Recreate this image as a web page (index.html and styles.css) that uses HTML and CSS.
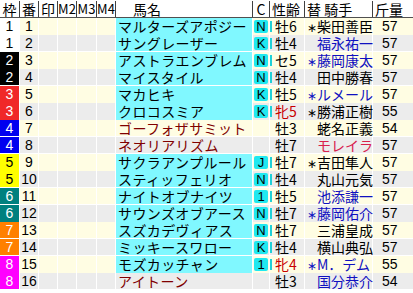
FILE: index.html
```html
<!DOCTYPE html>
<html lang="ja">
<head>
<meta charset="utf-8">
<link rel="stylesheet" href="styles.css">
</head>
<body>
<div class="sheet">
  <div class="row head">
    <div class="c">枠</div><div class="c">番</div><div class="c">印</div><div class="c m">M2</div><div class="c m">M3</div><div class="c m">M4</div>
    <div class="name">馬名</div><div class="c">C</div><div class="sex">性齢</div><div class="jk">替 騎手</div><div class="wt">斤量</div>
  </div>
  <div class="body">
    <div class="row odd"><div class="w w1">1</div><div class="n">1</div><div></div><div></div><div></div><div></div><div class="name cy">マルターズアポジー</div><div class="cc"><span class="bd">N</span></div><div class="sex bar">牡6</div><div class="jk"><span class="mk">∗</span>柴田善臣</div><div class="wt">57</div></div>
    <div class="row even"><div class="w w1">1</div><div class="n">2</div><div></div><div></div><div></div><div></div><div class="name cy">サングレーザー</div><div class="cc"><span class="bd">K</span></div><div class="sex bar">牡4</div><div class="jk blue"><span class="mk"></span>福永祐一</div><div class="wt">57</div></div>
    <div class="row odd"><div class="w w2">2</div><div class="n">3</div><div></div><div></div><div></div><div></div><div class="name cy">アストラエンブレム</div><div class="cc"><span class="bd">N</span></div><div class="sex bar">セ5</div><div class="jk blue"><span class="mk">∗</span>藤岡康太</div><div class="wt">57</div></div>
    <div class="row even"><div class="w w2">2</div><div class="n">4</div><div></div><div></div><div></div><div></div><div class="name cy">マイスタイル</div><div class="cc"><span class="bd">N</span></div><div class="sex bar">牡4</div><div class="jk"><span class="mk"></span>田中勝春</div><div class="wt">57</div></div>
    <div class="row odd"><div class="w w3">3</div><div class="n">5</div><div></div><div></div><div></div><div></div><div class="name cy">マカヒキ</div><div class="cc"><span class="bd">K</span></div><div class="sex bar">牡5</div><div class="jk blue"><span class="mk">∗</span>ルメール</div><div class="wt">57</div></div>
    <div class="row even"><div class="w w3">3</div><div class="n">6</div><div></div><div></div><div></div><div></div><div class="name cy">クロコスミア</div><div class="cc"><span class="bd">K</span></div><div class="sex bar red">牝5</div><div class="jk"><span class="mk">∗</span>勝浦正樹</div><div class="wt">55</div></div>
    <div class="row odd"><div class="w w4">4</div><div class="n">7</div><div></div><div></div><div></div><div></div><div class="name dr">ゴーフォザサミット</div><div class="cc"></div><div class="sex">牡3</div><div class="jk"><span class="mk"></span>蛯名正義</div><div class="wt">54</div></div>
    <div class="row even"><div class="w w4">4</div><div class="n">8</div><div></div><div></div><div></div><div></div><div class="name dr">ネオリアリズム</div><div class="cc"></div><div class="sex">牡7</div><div class="jk crim"><span class="mk"></span>モレイラ</div><div class="wt">57</div></div>
    <div class="row odd"><div class="w w5">5</div><div class="n">9</div><div></div><div></div><div></div><div></div><div class="name cy">サクラアンプルール</div><div class="cc"><span class="bd">J</span></div><div class="sex bar">牡7</div><div class="jk"><span class="mk">∗</span>吉田隼人</div><div class="wt">57</div></div>
    <div class="row even"><div class="w w5">5</div><div class="n">10</div><div></div><div></div><div></div><div></div><div class="name cy">スティッフェリオ</div><div class="cc"><span class="bd">N</span></div><div class="sex bar">牡4</div><div class="jk"><span class="mk"></span>丸山元気</div><div class="wt">57</div></div>
    <div class="row odd"><div class="w w6">6</div><div class="n">11</div><div></div><div></div><div></div><div></div><div class="name cy">ナイトオブナイツ</div><div class="cc"><span class="bd">1</span></div><div class="sex bar">牡5</div><div class="jk blue"><span class="mk"></span>池添謙一</div><div class="wt">57</div></div>
    <div class="row even"><div class="w w6">6</div><div class="n">12</div><div></div><div></div><div></div><div></div><div class="name cy">サウンズオブアース</div><div class="cc"><span class="bd">N</span></div><div class="sex bar">牡7</div><div class="jk blue"><span class="mk">∗</span>藤岡佑介</div><div class="wt">57</div></div>
    <div class="row odd"><div class="w w7">7</div><div class="n">13</div><div></div><div></div><div></div><div></div><div class="name cy">スズカデヴィアス</div><div class="cc"><span class="bd">N</span></div><div class="sex bar">牡7</div><div class="jk"><span class="mk"></span>三浦皇成</div><div class="wt">57</div></div>
    <div class="row even"><div class="w w7">7</div><div class="n">14</div><div></div><div></div><div></div><div></div><div class="name cy">ミッキースワロー</div><div class="cc"><span class="bd">K</span></div><div class="sex bar">牡4</div><div class="jk"><span class="mk"></span>横山典弘</div><div class="wt">57</div></div>
    <div class="row odd"><div class="w w8">8</div><div class="n">15</div><div></div><div></div><div></div><div></div><div class="name cy">モズカッチャン</div><div class="cc"><span class="bd">1</span></div><div class="sex bar red">牝4</div><div class="jk blue"><span class="mk">∗</span>M．デム</div><div class="wt">55</div></div>
    <div class="row even"><div class="w w8">8</div><div class="n">16</div><div></div><div></div><div></div><div></div><div class="name dr">アイトーン</div><div class="cc"></div><div class="sex">牡3</div><div class="jk blue"><span class="mk"></span>国分恭介</div><div class="wt">54</div></div>
  </div>
</div>
</body>
</html>
```
FILE: styles.css
```css
html, body {
  margin: 0;
  padding: 0;
  background: #ffffff;
}
body {
  font-family: "Noto Sans CJK JP", sans-serif;
  font-size: 14px;
  color: #000;
}
.sheet {
  width: 413px;
}
.row {
  display: grid;
  grid-template-columns: 19px 18px 18px 18px 19px 18px 136px 16px 34px 67px 40px;
  column-gap: 1px;
  height: 16px;
  line-height: 16px;
}
.row > div {
  white-space: nowrap;
  min-width: 0;
}
.head {
  height: 17px;
  line-height: 18px;
  border-bottom: 1px solid #505050;
  font-size: 14px;
  background: #fff;
}
.head > div {
  position: relative;
}
.head > div + div::before {
  content: "";
  position: absolute;
  left: -1px;
  top: 1px;
  bottom: 1px;
  width: 1px;
  background: #404040;
}
.head .c { text-align: center; }
.head .m { font-size: 13px; }
.head .name { padding-left: 17px; letter-spacing: 0; }
.head .sex { padding-left: 2px; }
.head .jk { padding-left: 2px; }
.head .wt { padding-left: 2px; }
.body {
  display: flex;
  flex-direction: column;
  row-gap: 1px;
  background: #fff;
}
.odd > div { background: #fffde3; }
.even > div { background: #ececec; }
.row > .w {
  text-align: center;
  color: #fff;
}
.row > .w1 { background: #fff; color: #000; }
.row > .w2 { background: #000; }
.row > .w3 { background: #f02828; }
.row > .w4 { background: #0000f0; }
.row > .w5 { background: #ffff00; color: #000; }
.row > .w6 { background: #00807f; }
.row > .w7 { background: #ff8000; }
.row > .w8 { background: #ff00ff; }
.body .w, .body .n, .body .wt {
  font-family: "Liberation Sans", Arial, sans-serif;
  font-size: 14px;
}
.n {
  text-align: center;
}
.name {
  padding-left: 2px;
  font-size: 14px;
  letter-spacing: 0.4px;
}
.row > .cy { background: #80f8ff; }
.dr { color: #800000; }
.cc {
  display: flex;
  align-items: center;
  padding-left: 1px;
}
.bd {
  display: block;
  width: 14px;
  height: 13px;
  line-height: 13px;
  text-align: center;
  background: #20e8f0;
  border-radius: 2px;
  font-family: "Liberation Sans", Arial, sans-serif;
  font-size: 13px;
}
.sex {
  position: relative;
  padding-left: 5px;
  font-size: 14px;
}
.bar::before {
  content: "";
  position: absolute;
  left: 0;
  top: 3px;
  width: 2px;
  height: 11px;
  background: #20d0d8;
}
.red { color: #c80000; }
.jk {
  padding-left: 1px;
  font-size: 14px;
}
.mk {
  display: inline-block;
  width: 11px;
  text-align: center;
  font-size: 12px;
}
.blue { color: #1010c0; }
.crim { color: #d8204c; }
.wt { padding-left: 9px; }
```
